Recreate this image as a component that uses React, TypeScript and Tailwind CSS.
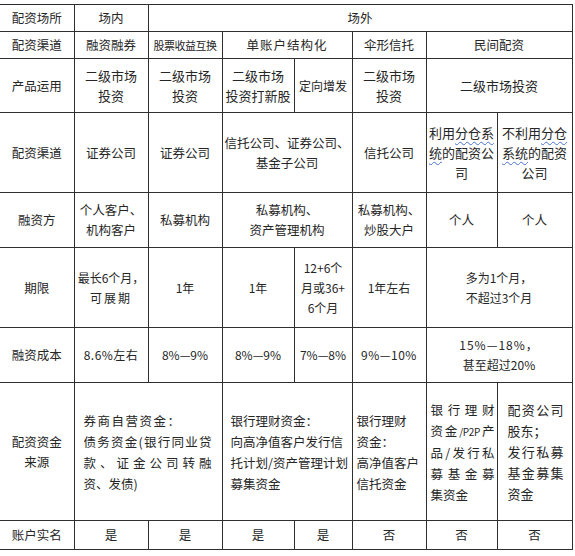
import React from 'react';

const td = 'border border-[#2f2f2f] text-center align-middle p-0 whitespace-nowrap';
const head = td + ' border-l-0';

// justified line of CJK text (spreads characters across the cell width)
function J({ children }: { children: React.ReactNode }) {
  return <div className="text-justify [text-align-last:justify] whitespace-nowrap">{children}</div>;
}

function Wavy({ children }: { children: React.ReactNode }) {
  return (
    <span className="underline decoration-wavy decoration-[#4a6fd0] decoration-1 underline-offset-[3px]">
      {children}
    </span>
  );
}

export default function App() {
  return (
    <div
      className="bg-white w-[575px] h-[556px] pt-[4px] text-[#262626] text-[12.5px] leading-[20px]"
      style={{ fontFamily: '"Noto Sans CJK SC", "Liberation Sans", sans-serif' }}
    >
      <table className="table-fixed border-collapse w-[572px]">
        <colgroup>
          <col className="w-[74px]" />
          <col className="w-[74px]" />
          <col className="w-[74px]" />
          <col className="w-[72px]" />
          <col className="w-[58px]" />
          <col className="w-[74px]" />
          <col className="w-[71px]" />
          <col className="w-[75px]" />
        </colgroup>
        <tbody>
          <tr className="h-[27px]">
            <td className={head}>配资场所</td>
            <td className={td}>场内</td>
            <td className={td} colSpan={6}>场外</td>
          </tr>
          <tr className="h-[27px]">
            <td className={head}>配资渠道</td>
            <td className={td}>融资融券</td>
            <td className={td + ' text-[11px] tracking-[-0.5px]'}>股票收益互换</td>
            <td className={td + ' tracking-[1px]'} colSpan={2}>单账户结构化</td>
            <td className={td}>伞形信托</td>
            <td className={td} colSpan={2}>民间配资</td>
          </tr>
          <tr className="h-[54px]">
            <td className={head}>产品运用</td>
            <td className={td + ' text-[13px]'}>二级市场<br />投资</td>
            <td className={td + ' text-[13px]'}>二级市场<br />投资</td>
            <td className={td + ' text-[13px]'}>二级市场<br />投资打新股</td>
            <td className={td + ' text-[12px]'}>定向增发</td>
            <td className={td + ' text-[13px]'}>二级市场<br />投资</td>
            <td className={td + ' text-[13px]'} colSpan={2}>二级市场投资</td>
          </tr>
          <tr className="h-[80px]">
            <td className={head}>配资渠道</td>
            <td className={td}>证券公司</td>
            <td className={td}>证券公司</td>
            <td className={td} colSpan={2}>信托公司、证券公司、<br />基金子公司</td>
            <td className={td}>信托公司</td>
            <td className={td + ' text-[13px]'}>
              利用<Wavy>分仓系</Wavy>
              <br />
              <Wavy>统</Wavy>的配资公
              <br />司
            </td>
            <td className={td + ' text-[13px]'}>
              不利用<Wavy>分仓</Wavy>
              <br />
              <Wavy>系统</Wavy>的配资
              <br />公司
            </td>
          </tr>
          <tr className="h-[55px]">
            <td className={head}>融资方</td>
            <td className={td}>个人客户、<br />机构客户</td>
            <td className={td}>私募机构</td>
            <td className={td} colSpan={2}>私募机构、<br />资产管理机构</td>
            <td className={td}>私募机构、<br />炒股大户</td>
            <td className={td}>个人</td>
            <td className={td}>个人</td>
          </tr>
          <tr className="h-[80px]">
            <td className={head}>期限</td>
            <td className={td + ' text-[12px]'}>最长6个月，<br /><span className="tracking-[2px]">可展期</span></td>
            <td className={td + ' text-[12px]'}>1年</td>
            <td className={td + ' text-[12px]'}>1年</td>
            <td className={td + ' text-[12px]'}>12+6个<br />月或36+<br />6个月</td>
            <td className={td + ' text-[12px]'}>1年左右</td>
            <td className={td + ' text-[12px]'} colSpan={2}>多为1个月，<br />不超过3个月</td>
          </tr>
          <tr className="h-[55px]">
            <td className={head}>融资成本</td>
            <td className={td + ' text-[12px] tracking-[0.5px]'}>8.6%左右</td>
            <td className={td + ' text-[12px]'}>8%—9%</td>
            <td className={td + ' text-[12px]'}>8%—9%</td>
            <td className={td + ' text-[12px]'}>7%—8%</td>
            <td className={td + ' text-[12px] tracking-[0.5px]'}>9%—10%</td>
            <td className={td + ' text-[12px]'} colSpan={2}>
              <span className="tracking-[1px]">15%—18%，</span>
              <br />
              甚至超过20%
            </td>
          </tr>
          <tr className="h-[138px]">
            <td className={head}>配资资金<br />来源</td>
            <td className={td + ' text-left leading-[21px] pl-[9px] pr-[10px]'} colSpan={2}>
              <div className="tracking-[1.5px]">券商自营资金：</div>
              <J>债务资金(银行同业贷</J>
              <J>款、证金公司转融</J>
              <div>资、发债)</div>
            </td>
            <td className={td + ' text-left text-[12.5px] leading-[21px] pl-[8px]'} colSpan={2}>
              银行理财资金：<br />
              向高净值客户发行信<br />
              托计划/资产管理计划<br />
              募集资金
            </td>
            <td className={td + ' text-left leading-[21px] pl-[4px]'}>
              银行理财<br />
              资金：<br />
              高净值客户<br />
              信托资金
            </td>
            <td className={td + ' text-left text-[12.5px] leading-[21px] pl-[4px] pr-[2px]'}>
              <J>银行理财</J>
              <J>
                资金<span className="text-[10px] tracking-[-0.3px]">/P2P</span>产
              </J>
              <J>品/发行私</J>
              <J>募基金募</J>
              <div>集资金</div>
            </td>
            <td className={td + ' text-left text-[13px] leading-[21px] pl-[10px] pr-[8px]'}>
              <J>配资公司</J>
              <div>股东；</div>
              <J>发行私募</J>
              <J>基金募集</J>
              <div>资金</div>
            </td>
          </tr>
          <tr className="h-[29px]">
            <td className={head}>账户实名</td>
            <td className={td}>是</td>
            <td className={td}>是</td>
            <td className={td}>是</td>
            <td className={td}>是</td>
            <td className={td}>否</td>
            <td className={td}>否</td>
            <td className={td}>否</td>
          </tr>
        </tbody>
      </table>
    </div>
  );
}
